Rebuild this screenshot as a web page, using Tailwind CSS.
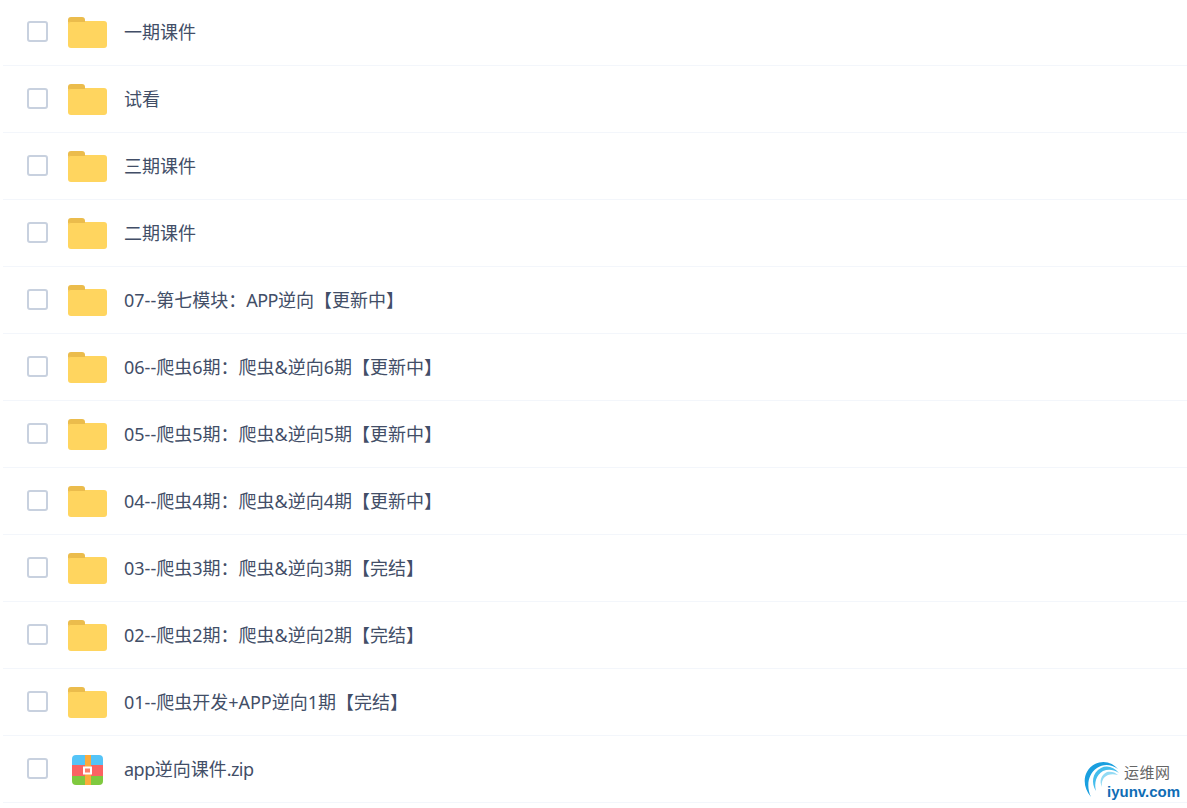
<!DOCTYPE html>
<html lang="zh-CN">
  <head>
    <meta charset="UTF-8" />
    <title>文件列表</title>
    <script src="https://cdn.jsdelivr.net/npm/@tailwindcss/browser@4"></script>
  </head>
  <body class="bg-white overflow-hidden">
    <svg class="hidden">
      <symbol id="folder" viewBox="0 0 39 31">
        <path d="M0 3a3 3 0 0 1 3-3h11a3 3 0 0 1 3 3v2H0z" fill="#ebbc4c" />
        <rect x="0" y="4" width="39" height="27" rx="3" fill="#ffd55f" />
        <path d="M0 7a3 3 0 0 1 3-3h14v1H3a3 3 0 0 0-3 2z" fill="#ebbc4c" />
      </symbol>
    </svg>

    <div class="relative h-[808px] pl-[3px] font-['Noto_Sans','Noto_Sans_CJK_SC',sans-serif] text-[18px] text-[#424e67]">
      <ul class="-mt-px">
        <li class="flex items-center h-[67px] pl-6 border-b border-[#f3f6fb]">
          <span class="w-[21px] h-[21px] mb-0.5 rounded-[3px] border-2 border-[#c8d1df] bg-white"></span>
          <svg class="ml-5 w-[39px] h-[31px] mt-px"><use href="#folder" /></svg>
          <span class="ml-[17px] mt-px">一期课件</span>
        </li>
        <li class="flex items-center h-[67px] pl-6 border-b border-[#f3f6fb]">
          <span class="w-[21px] h-[21px] mb-0.5 rounded-[3px] border-2 border-[#c8d1df] bg-white"></span>
          <svg class="ml-5 w-[39px] h-[31px] mt-px"><use href="#folder" /></svg>
          <span class="ml-[17px] mt-px">试看</span>
        </li>
        <li class="flex items-center h-[67px] pl-6 border-b border-[#f3f6fb]">
          <span class="w-[21px] h-[21px] mb-0.5 rounded-[3px] border-2 border-[#c8d1df] bg-white"></span>
          <svg class="ml-5 w-[39px] h-[31px] mt-px"><use href="#folder" /></svg>
          <span class="ml-[17px] mt-px">三期课件</span>
        </li>
        <li class="flex items-center h-[67px] pl-6 border-b border-[#f3f6fb]">
          <span class="w-[21px] h-[21px] mb-0.5 rounded-[3px] border-2 border-[#c8d1df] bg-white"></span>
          <svg class="ml-5 w-[39px] h-[31px] mt-px"><use href="#folder" /></svg>
          <span class="ml-[17px] mt-px">二期课件</span>
        </li>
        <li class="flex items-center h-[67px] pl-6 border-b border-[#f3f6fb]">
          <span class="w-[21px] h-[21px] mb-0.5 rounded-[3px] border-2 border-[#c8d1df] bg-white"></span>
          <svg class="ml-5 w-[39px] h-[31px] mt-px"><use href="#folder" /></svg>
          <span class="ml-[17px] mt-px">07--第七模块：<span class="tracking-[-0.5px]">APP</span>逆向【更新中】</span>
        </li>
        <li class="flex items-center h-[67px] pl-6 border-b border-[#f3f6fb]">
          <span class="w-[21px] h-[21px] mb-0.5 rounded-[3px] border-2 border-[#c8d1df] bg-white"></span>
          <svg class="ml-5 w-[39px] h-[31px] mt-px"><use href="#folder" /></svg>
          <span class="ml-[17px] mt-px">06--爬虫6期：爬虫&amp;逆向6期【更新中】</span>
        </li>
        <li class="flex items-center h-[67px] pl-6 border-b border-[#f3f6fb]">
          <span class="w-[21px] h-[21px] mb-0.5 rounded-[3px] border-2 border-[#c8d1df] bg-white"></span>
          <svg class="ml-5 w-[39px] h-[31px] mt-px"><use href="#folder" /></svg>
          <span class="ml-[17px] mt-px">05--爬虫5期：爬虫&amp;逆向5期【更新中】</span>
        </li>
        <li class="flex items-center h-[67px] pl-6 border-b border-[#f3f6fb]">
          <span class="w-[21px] h-[21px] mb-0.5 rounded-[3px] border-2 border-[#c8d1df] bg-white"></span>
          <svg class="ml-5 w-[39px] h-[31px] mt-px"><use href="#folder" /></svg>
          <span class="ml-[17px] mt-px">04--爬虫4期：爬虫&amp;逆向4期【更新中】</span>
        </li>
        <li class="flex items-center h-[67px] pl-6 border-b border-[#f3f6fb]">
          <span class="w-[21px] h-[21px] mb-0.5 rounded-[3px] border-2 border-[#c8d1df] bg-white"></span>
          <svg class="ml-5 w-[39px] h-[31px] mt-px"><use href="#folder" /></svg>
          <span class="ml-[17px] mt-px">03--爬虫3期：爬虫&amp;逆向3期【完结】</span>
        </li>
        <li class="flex items-center h-[67px] pl-6 border-b border-[#f3f6fb]">
          <span class="w-[21px] h-[21px] mb-0.5 rounded-[3px] border-2 border-[#c8d1df] bg-white"></span>
          <svg class="ml-5 w-[39px] h-[31px] mt-px"><use href="#folder" /></svg>
          <span class="ml-[17px] mt-px">02--爬虫2期：爬虫&amp;逆向2期【完结】</span>
        </li>
        <li class="flex items-center h-[67px] pl-6 border-b border-[#f3f6fb]">
          <span class="w-[21px] h-[21px] mb-0.5 rounded-[3px] border-2 border-[#c8d1df] bg-white"></span>
          <svg class="ml-5 w-[39px] h-[31px] mt-px"><use href="#folder" /></svg>
          <span class="ml-[17px] mt-px">01--爬虫开发+APP逆向1期【完结】</span>
        </li>
        <li class="flex items-center h-[67px] pl-6 border-b border-[#f3f6fb]">
          <span class="w-[21px] h-[21px] mb-0.5 rounded-[3px] border-2 border-[#c8d1df] bg-white"></span>
          <span class="ml-5 w-[39px] h-[31px] mt-px flex items-center justify-center">
            <svg class="w-[31px] h-[30px]" viewBox="0 0 31 30">
              <defs><clipPath id="zipclip"><rect width="31" height="30" rx="4" /></clipPath></defs>
              <g clip-path="url(#zipclip)">
                <rect width="31" height="10" fill="#55c4f7" />
                <rect y="10" width="31" height="11" fill="#fb6363" />
                <rect y="21" width="31" height="9" fill="#7fc93f" />
                <rect x="13" width="6" height="30" fill="#fbab3c" />
                <rect x="11" y="11.5" width="9" height="8" fill="#fff" />
                <rect x="13" y="13.5" width="5" height="4" fill="#fc7f6a" />
              </g>
            </svg>
          </span>
          <span class="ml-[17px] mt-px"><span class="tracking-[-0.5px]">app</span>逆向课件<span class="tracking-[-0.6px]">.zip</span></span>
        </li>
      </ul>

      <div class="absolute left-[1083px] top-[760px] w-[104px] h-[42px]">
        <svg class="absolute left-0 top-0 w-[42px] h-[42px]" viewBox="0 0 42 42" fill="none">
          <path d="M8 38C-1 28 -1 12 12 5c8-4 17-2 23 5C28 5 20 5 14 9 5 15 3 27 8 38z" fill="#1a9fdf" />
          <path d="M13 32C8 24 9 14 18 9c6-3 13-1 18 5-6-4-11-4-16-2-7 4-9 12-7 20z" fill="#45bdec" />
          <path d="M19 28c-3-6-1-12 5-15 4-1 8 0 11 3-4-1-7-1-10 0-5 2-7 7-6 12z" fill="#92daf4" />
        </svg>
        <span class="absolute left-[41px] top-[3px] text-[15px] leading-5 tracking-[0.5px] text-[#666666] font-['Noto_Sans_CJK_SC',sans-serif]">运维网</span>
        <span class="absolute left-[24px] top-[23px] text-[15px] leading-5 font-bold text-[#0f6db5] font-['Liberation_Sans',sans-serif]">iyunv.com</span>
      </div>
    </div>
  </body>
</html>
